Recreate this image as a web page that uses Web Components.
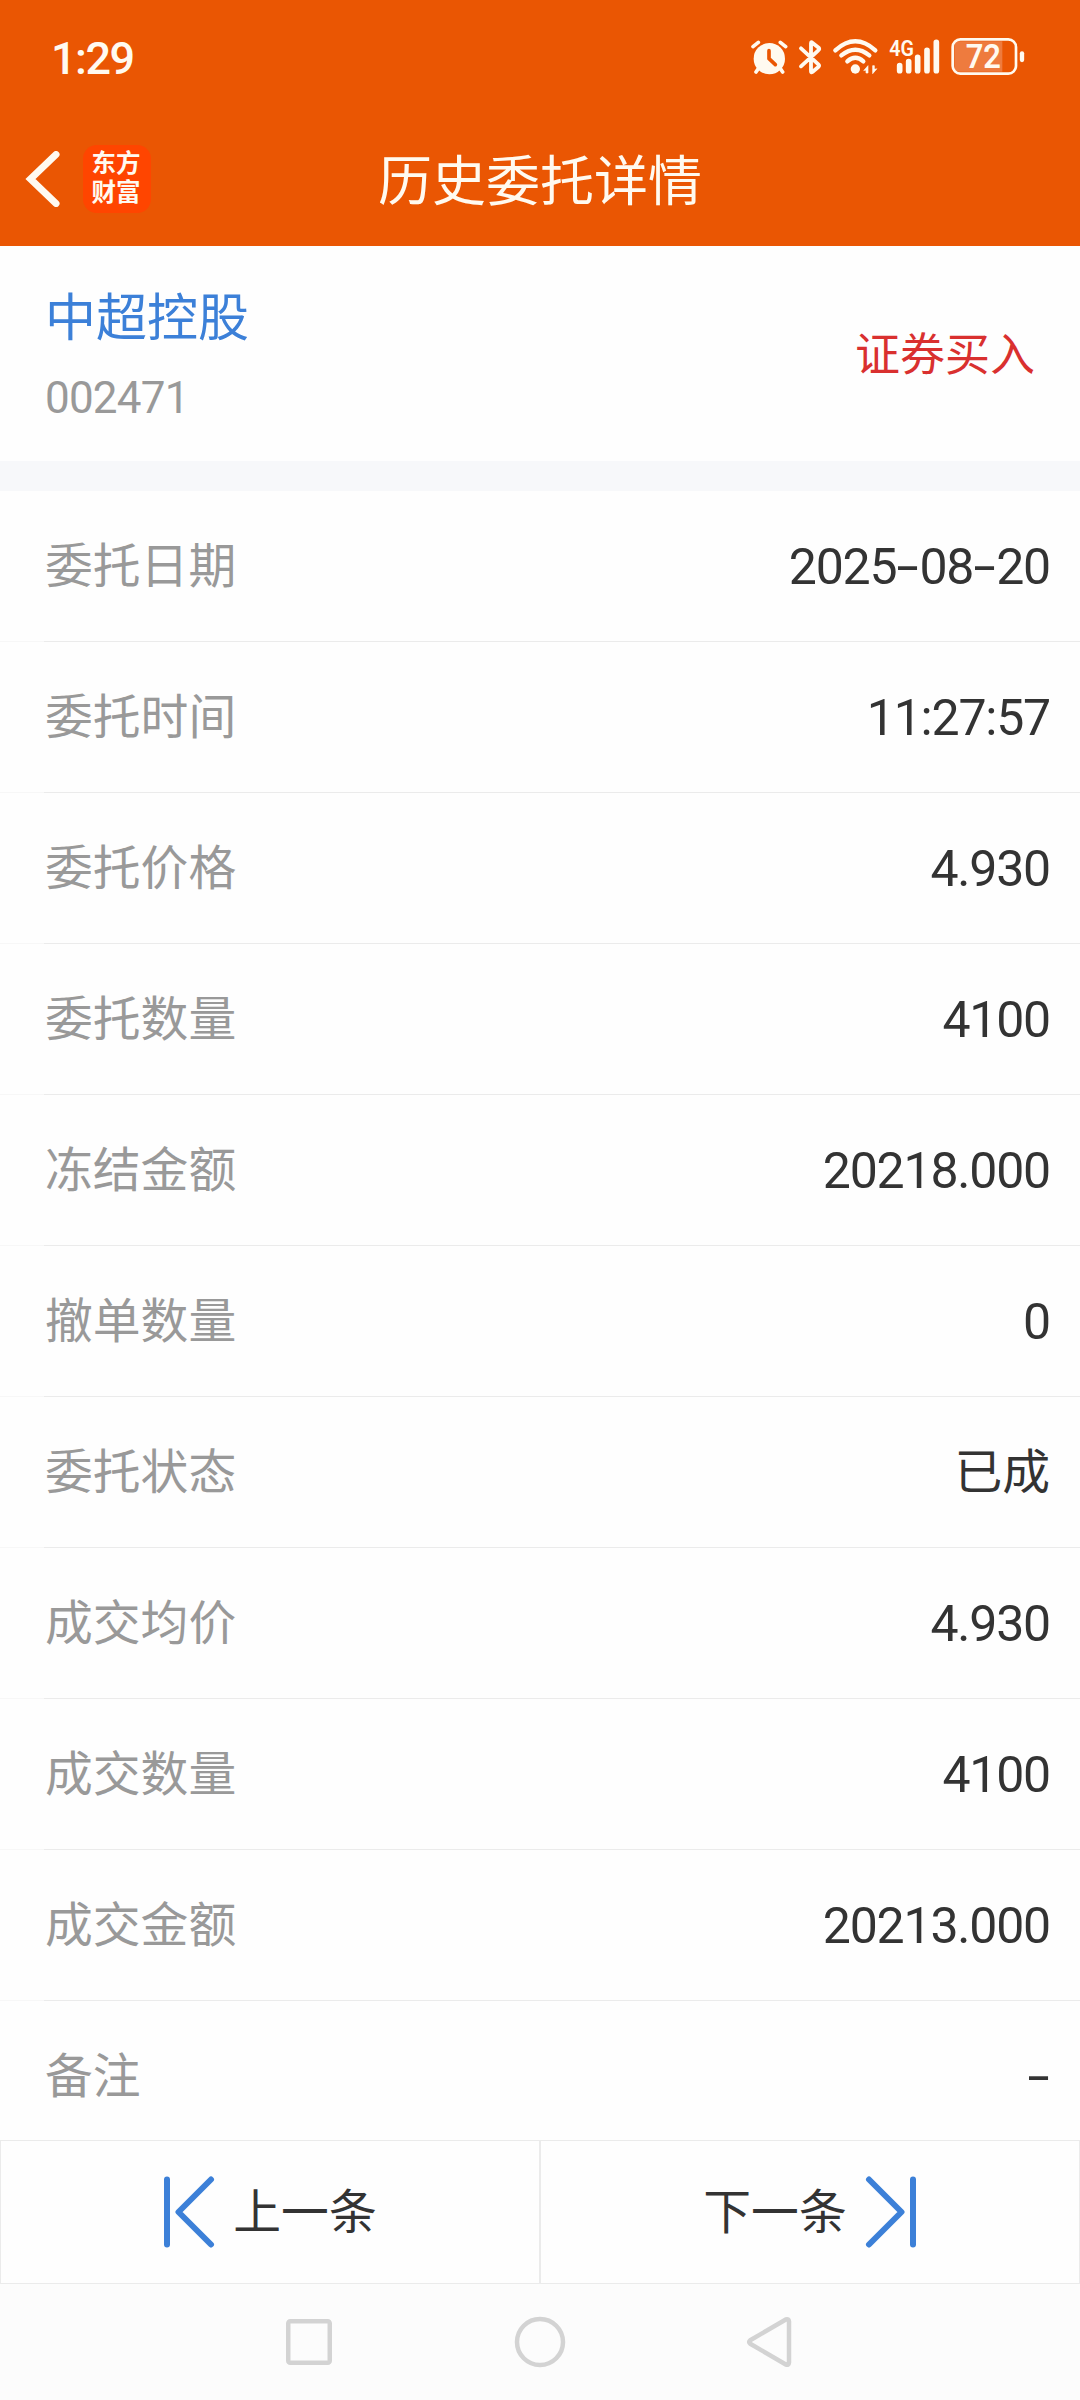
<!DOCTYPE html>
<html lang="zh-CN">
<head>
<meta charset="utf-8">
<title>历史委托详情</title>
<style>
    body {
        margin: 0;
        width: 1080px;
        height: 2400px;
        overflow: hidden;
        background: #fefefe;
        font-family: 'Noto Sans CJK SC', sans-serif;
        --num: Roboto, 'Noto Sans CJK SC', sans-serif;
        --orange: #ea5603;
        --blue: #3c80d8;
    }
</style>
</head>
<body>
<order-page></order-page>

<script>
// attaches an open shadow root with the given markup
function shadow(el, html) {
    const template = document.createElement('template');
    template.innerHTML = html;
    el.attachShadow({ mode: 'open' });
    el.shadowRoot.appendChild(template.content.cloneNode(true));
}

class StatusBar extends HTMLElement {
    constructor() {
        super();
        shadow(this, `
<style>
    :host {
        display: flex;
        justify-content: space-between;
        box-sizing: border-box;
        height: 112px;
        padding: 2px 54px 0 51px;
        background: var(--orange);
        color: #fffaf0;
        font-family: var(--num);
    }

    .time {
        font-size: 45px;
        font-weight: 500;
        letter-spacing: -1.5px;
        line-height: 114px;
    }

    .icons {
        display: flex;
        padding-top: 36px;
    }

    svg {
        display: block;
        overflow: visible;
        height: 40px;
        fill: none;
        stroke: currentColor;
        stroke-linecap: round;
        stroke-linejoin: round;
    }

    text {
        fill: currentColor;
        stroke: none;
        font-weight: 600;
    }
</style>
<span class="time"><slot></slot></span>
<div class="icons">
    <svg width="46" viewBox="62 54 138 120">
        <circle cx="117" cy="116" r="47" fill="currentColor" stroke="none"/>
        <path d="M68 80 84 67M166 80 150 67" stroke-width="11"/>
        <path d="M84 146 77 156M150 146 157 156" stroke-width="11"/>
        <path d="M116 92V116L135 134" stroke="#ea5603" stroke-width="11"/>
    </svg>
    <svg width="36" viewBox="200 54 108 120">
        <path d="M212 85 264 133Q268 137 264 141L246 156Q242 159 242 154V70Q242 65 246 68L265 83Q269 87 264 91L212 139" stroke-width="11.500"/>
    </svg>
    <svg width="56" viewBox="308 54 168 120">
        <path d="M315 91Q375 37 435 91M333 106Q375 72 417 106M351 124Q375 103 399 124" stroke-width="13"/>
        <circle cx="375" cy="147" r="14" fill="currentColor" stroke="none"/>
        <path d="M401 151 413 137V159H407V151ZM439 147 427 161V137H432V147Z" fill="currentColor" stroke-width="2"/>
    </svg>
    <svg width="62" viewBox="476 54 186 120">
        <text x="477" y="108" font-size="65" textLength="74" lengthAdjust="spacingAndGlyphs">4G</text>
        <path d="M508 137V152M535 125V152M562 112V152M590 91V152M618 67V152" stroke-width="17"/>
    </svg>
    <svg width="75" viewBox="662 54 225 120">
        <path d="M682 64H816V155H682Q672 155 672 143V76Q672 64 682 64Z" fill="#ee7b3e" stroke="none"/>
        <rect x="667" y="58" width="190" height="103" rx="23" stroke-width="8"/>
        <path d="M875 100V120" stroke-width="13"/>
        <text x="706" y="144" font-size="100" textLength="106" lengthAdjust="spacingAndGlyphs">72</text>
    </svg>
</div>
`);
    }
}

class AppHeader extends HTMLElement {
    constructor() {
        super();
        shadow(this, `
<style>
    :host {
        display: grid;
        grid-template-columns: 1fr auto 1fr;
        align-items: center;
        height: 134px;
        background: var(--orange);
        color: #fffaf0;
    }

    .left {
        display: flex;
        align-items: center;
        padding-left: 24px;
        gap: 23px;
    }

    svg {
        display: block;
    }

    .logo {
        box-sizing: border-box;
        width: 68px;
        height: 68px;
        padding: 4px 2px 0 0;
        border-radius: 14px;
        background: #ff4500;
        font-family: 'Liberation Sans', 'Noto Sans CJK SC', sans-serif;
        font-size: 24.500px;
        font-weight: 700;
        line-height: 29px;
        text-align: center;
    }

    .title {
        font-size: 54px;
        line-height: 80px;
        padding-bottom: 3px;
    }
</style>
<div class="left">
    <svg width="36" height="56" viewBox="0 0 36 56">
        <path d="M32 3.500 6.500 28 32 52.500" fill="none" stroke="currentColor" stroke-width="7" stroke-linecap="round"/>
    </svg>
    <div class="logo">东方<br>财富</div>
</div>
<div class="title"><slot></slot></div>
`);
    }
}

class StockInfo extends HTMLElement {
    constructor() {
        super();
        shadow(this, `
<style>
    :host {
        display: flex;
        align-items: center;
        justify-content: space-between;
        box-sizing: border-box;
        height: 245px;
        padding: 0 45px;
        border-bottom: 30px solid #f7f8fa;
    }

    .name {
        color: var(--blue);
        font-size: 51px;
        line-height: 80px;
    }

    .code {
        color: #999;
        font-family: var(--num);
        font-size: 44px;
        letter-spacing: -0.8px;
        line-height: 80px;
        padding-top: 4px;
        margin-bottom: -4px;
    }

    .side {
        color: #d9302f;
        font-size: 45px;
        line-height: 60px;
        padding-bottom: 3px;
    }
</style>
<div>
    <div class="name"><slot name="name"></slot></div>
    <div class="code"><slot name="code"></slot></div>
</div>
<div class="side"><slot name="side"></slot></div>
`);
    }
}

class DetailRow extends HTMLElement {
    constructor() {
        super();
        shadow(this, `
<style>
    :host {
        display: flex;
        justify-content: space-between;
        height: 150px;
        padding: 0 30px 0 45px;
        border-bottom: 1px solid;
        border-image: linear-gradient(90deg, #f7f7f7 45px, #ebebeb 45px) 1;
    }

    :host([last]) {
        height: 139px;
        border: 0;
    }

    .label {
        color: #999;
        font-size: 47.800px;
        line-height: 144px;
    }

    .value {
        color: #333;
        font-family: var(--num);
        font-size: 50px;
        letter-spacing: -1.200px;
        line-height: 152px;
    }

    .value.cjk {
        font-family: inherit;
        font-size: 47.800px;
        letter-spacing: 0;
        line-height: 144px;
    }

    .dash {
        display: inline-block;
        width: 23px;
        text-align: center;
        letter-spacing: 0;
        transform: translateY(-1px) scaleX(1.6);
    }
</style>
<span class="label"></span>
<span class="value"></span>
`);
        this.shadowRoot.querySelector('.label').innerText = this.getAttribute('label');
        const text = this.getAttribute('value');
        const value = this.shadowRoot.querySelector('.value');
        value.innerHTML = text.replace(/-/g, '<span class="dash">-</span>');
        if (/[^\x00-\x7f]/.test(text)) value.classList.add('cjk');
    }
}

class PagerBar extends HTMLElement {
    constructor() {
        super();
        shadow(this, `
<style>
    :host {
        display: grid;
        grid-template-columns: 1fr 1fr;
        height: 144px;
    }

    div {
        display: flex;
        align-items: center;
        justify-content: center;
        gap: 18px;
        border: 1px solid #ebebeb;
        color: #333;
        font-size: 47.800px;
    }

    span {
        line-height: 80px;
        padding-bottom: 6px;
    }

    svg {
        fill: none;
        stroke: var(--blue);
        stroke-width: 6;
        stroke-linecap: round;
        stroke-linejoin: round;
    }
</style>
<div>
    <svg width="52" height="72" viewBox="0 0 52 72">
        <path d="M4 3.500V68.500M48 3.500 15.500 36 48 68.500"/>
    </svg>
    <span><slot name="prev"></slot></span>
</div>
<div>
    <span><slot name="next"></slot></span>
    <svg width="52" height="72" viewBox="0 0 52 72">
        <path d="M48 3.500V68.500M4 3.500 36.500 36 4 68.500"/>
    </svg>
</div>
`);
    }
}

class NavBar extends HTMLElement {
    constructor() {
        super();
        shadow(this, `
<style>
    :host {
        display: flex;
        align-items: center;
        justify-content: center;
        gap: 178px;
        height: 116px;
        background: #fcfcfc;
    }

    svg {
        fill: none;
        stroke: #d3d3d3;
        stroke-width: 4.500;
        stroke-linejoin: round;
    }
</style>
<svg width="52" height="52" viewBox="0 0 52 52"><rect x="4.250" y="5.250" width="41.500" height="41.500" rx="2"/></svg>
<svg width="52" height="52" viewBox="0 0 52 52"><circle cx="26" cy="26" r="23"/></svg>
<svg width="52" height="52" viewBox="0 0 52 52"><path d="M6.200 24.300 41.800 3.500Q44.800 2.500 45 5.500V46.500Q44.800 49.500 41.800 48.500L6.200 27.700Q4 26 6.200 24.300Z"/></svg>
`);
    }
}

class OrderPage extends HTMLElement {
    constructor() {
        super();
        shadow(this, `
<style>
    :host {
        display: flex;
        flex-direction: column;
    }
</style>
<status-bar>1:29</status-bar>
<app-header>历史委托详情</app-header>
<stock-info>
    <span slot="name">中超控股</span>
    <span slot="code">002471</span>
    <span slot="side">证券买入</span>
</stock-info>
<detail-row label="委托日期" value="2025-08-20"></detail-row>
<detail-row label="委托时间" value="11:27:57"></detail-row>
<detail-row label="委托价格" value="4.930"></detail-row>
<detail-row label="委托数量" value="4100"></detail-row>
<detail-row label="冻结金额" value="20218.000"></detail-row>
<detail-row label="撤单数量" value="0"></detail-row>
<detail-row label="委托状态" value="已成"></detail-row>
<detail-row label="成交均价" value="4.930"></detail-row>
<detail-row label="成交数量" value="4100"></detail-row>
<detail-row label="成交金额" value="20213.000"></detail-row>
<detail-row label="备注" value="-" last></detail-row>
<pager-bar>
    <span slot="prev">上一条</span>
    <span slot="next">下一条</span>
</pager-bar>
<nav-bar></nav-bar>
`);
    }
}

// order-page goes first: its rows are upgraded in place
// and read their attributes in the constructor
window.customElements.define('order-page', OrderPage);
window.customElements.define('status-bar', StatusBar);
window.customElements.define('app-header', AppHeader);
window.customElements.define('stock-info', StockInfo);
window.customElements.define('detail-row', DetailRow);
window.customElements.define('pager-bar', PagerBar);
window.customElements.define('nav-bar', NavBar);
</script>
</body>
</html>
